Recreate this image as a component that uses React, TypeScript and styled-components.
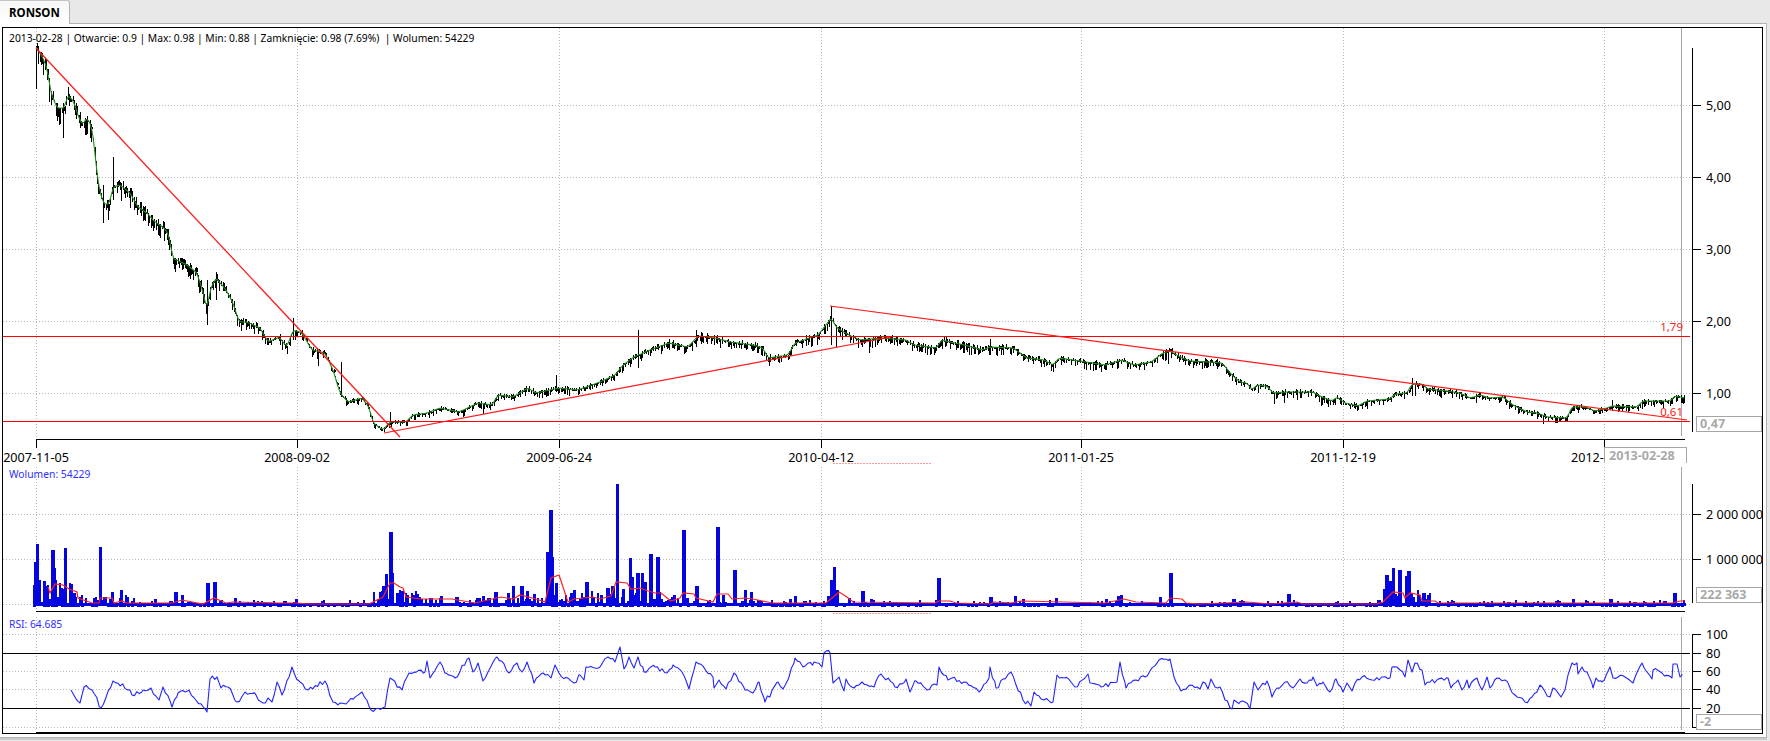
import styled, { createGlobalStyle } from "styled-components";

// all chart coordinates below are page pixels, every pane svg uses a viewBox that maps them 1:1
const LEFT = 3;
const WIDTH = 1759;
const AXIS_X = 1692;
const GRID_X = [36, 297, 559, 821, 1081, 1343, 1604];
const DATES: [number, string][] = [
	[36, "2007-11-05"],
	[297, "2008-09-02"],
	[559, "2009-06-24"],
	[821, "2010-04-12"],
	[1081, "2011-01-25"],
	[1343, "2011-12-19"],
];

const closeTrace = [
	36, 46, 38, 50, 44, 60, 48, 72, 50, 90, 57, 108, 65, 108, 67, 95, 73, 100, 78, 115, 82, 125, 87, 118, 92, 127, 95, 153, 98, 183, 103, 203, 109, 205, 113, 187, 120, 185, 130, 193, 138, 207, 147, 213, 155, 222, 163, 227, 168, 233, 172, 250, 172, 258, 187, 265, 197, 273, 203, 292, 207, 310, 210, 290, 216, 278, 226, 290, 233, 303, 239, 322, 247, 322, 260, 328, 268, 342, 279, 337, 287, 347, 293, 330, 302, 333, 312, 350, 325, 353, 333, 370, 340, 393, 348, 402, 362, 398, 369, 407, 373, 423, 383, 430, 390, 422, 406, 422, 413, 415, 427, 413, 440, 408, 459, 412, 478, 403, 492, 405, 498, 395, 513, 397, 528, 388, 536, 393, 559, 388, 578, 390, 600, 382, 615, 375, 623, 365, 634, 357, 650, 350, 669, 343, 688, 347, 698, 336, 715, 338, 730, 342, 753, 345, 763, 348, 768, 358, 788, 355, 795, 343, 818, 335, 826, 325, 831, 318, 837, 328, 849, 335, 860, 340, 883, 338, 906, 340, 914, 345, 937, 348, 941, 340, 964, 345, 983, 350, 990, 347, 1013, 348, 1027, 358, 1044, 360, 1053, 365, 1059, 358, 1086, 362, 1105, 365, 1122, 360, 1134, 365, 1151, 362, 1163, 353, 1170, 351, 1182, 358, 1190, 361, 1210, 362, 1222, 363, 1232, 375, 1240, 382, 1247, 383, 1252, 390, 1257, 385, 1267, 386, 1273, 393, 1287, 392, 1313, 392, 1322, 397, 1332, 401, 1337, 397, 1345, 403, 1358, 406, 1367, 401, 1390, 399, 1395, 394, 1407, 393, 1412, 384, 1423, 384, 1427, 389, 1447, 391, 1460, 393, 1470, 398, 1480, 395, 1490, 398, 1503, 397, 1513, 405, 1527, 412, 1537, 413, 1548, 417, 1567, 418, 1572, 407, 1585, 407, 1595, 411, 1607, 408, 1612, 406, 1637, 407, 1643, 401, 1670, 401, 1675, 396, 1685, 398,
];

// long wicks that stand out from the noise: x, high, low
const wicks = [
	[36, 49, 89], [103, 185, 223], [113, 157, 200], [207, 280, 325], [216, 272, 300], [293, 318, 340], [341, 362, 396], [390, 412, 425], [483, 404, 414], [556, 375, 392], [638, 330, 368], [696, 330, 345], [831, 306, 345], [836, 325, 347], [990, 339, 352], [1168, 350, 364], [1412, 378, 396], [1612, 400, 411],
];

const volumeBars = [
	[34, 562, 3], [36, 544, 3], [39, 580, 2], [43, 581, 3], [46, 590, 3], [51, 550, 4], [53, 568, 3], [64, 548, 3], [69, 597, 3], [73, 593, 3], [99, 547, 3], [111, 592, 3], [120, 590, 3], [154, 599, 3], [174, 592, 4], [181, 595, 3], [206, 583, 4], [213, 582, 4], [234, 598, 3], [295, 599, 3], [382, 586, 3], [385, 574, 3], [389, 532, 4], [392, 573, 2], [396, 593, 3], [401, 591, 3], [406, 595, 3], [417, 597, 3], [430, 598, 3], [440, 596, 3], [476, 598, 3], [482, 596, 3], [494, 592, 4], [507, 593, 3], [512, 586, 3], [520, 586, 4], [526, 591, 3], [533, 594, 3], [546, 552, 3], [549, 510, 4], [552, 557, 2], [555, 583, 3], [570, 593, 3], [573, 590, 3], [585, 582, 4],
	[600, 595, 3], [606, 588, 4], [611, 586, 4], [616, 484, 3], [622, 589, 3], [629, 558, 3], [631, 577, 3], [636, 573, 4], [641, 573, 3], [644, 582, 3], [649, 554, 4], [656, 557, 4], [673, 595, 3], [682, 530, 4], [686, 598, 3], [695, 586, 4], [716, 527, 4], [722, 595, 3], [733, 570, 4], [744, 590, 3], [750, 592, 3], [789, 599, 3], [794, 596, 3], [827, 596, 3], [830, 580, 3], [833, 567, 3], [836, 590, 3], [848, 598, 3], [861, 591, 4], [870, 599, 3], [937, 578, 4], [989, 597, 4], [1014, 596, 3], [1022, 599, 3], [1055, 598, 3], [1105, 599, 3], [1117, 596, 4], [1120, 595, 3], [1159, 597, 3], [1169, 573, 4],
	[1223, 602, 3], [1232, 599, 4], [1242, 601, 3], [1287, 594, 4], [1377, 600, 4], [1383, 589, 2], [1385, 575, 4], [1389, 581, 3], [1392, 568, 3], [1395, 598, 2], [1398, 570, 4], [1405, 576, 2], [1407, 571, 4], [1412, 597, 3], [1422, 593, 4], [1424, 598, 2], [1572, 599, 3], [1609, 599, 4], [1673, 593, 4],
];

const volumeAvg = [
	48, 587, 50, 593, 55, 584, 63, 585, 69, 589, 77, 592, 78, 598, 92, 603, 99, 603, 100, 598, 112, 598, 114, 603, 122, 601, 126, 603, 172, 603, 182, 600, 203, 604, 214, 598, 226, 603, 233, 602, 279, 603, 295, 603, 310, 604, 369, 604, 383, 597, 390, 583, 394, 583, 400, 587, 403, 588, 406, 597, 421, 599, 452, 599, 475, 603, 501, 597, 513, 599, 520, 595, 536, 599, 545, 602, 551, 578, 559, 575, 564, 590, 568, 602, 574, 599, 593, 597, 600, 599, 611, 596, 616, 582, 627, 583, 631, 589, 640, 588, 648, 591, 655, 593, 661, 593, 671, 601, 680, 598, 683, 593, 694, 594, 696, 598, 713, 602, 717, 594, 728, 594, 732, 599, 745, 598, 753, 599, 772, 603, 826, 603, 832, 598, 839, 592, 847, 597, 853, 602, 935, 603, 939, 601, 950, 601, 956, 603, 990, 604, 994, 602, 1011, 603, 1021, 601, 1105, 603, 1124, 599, 1136, 602, 1166, 603, 1170, 598, 1182, 599, 1186, 603, 1200, 604, 1247, 602, 1270, 604, 1297, 602, 1303, 604, 1377, 604, 1383, 602, 1393, 592, 1403, 593, 1405, 598, 1410, 593, 1420, 595, 1422, 601, 1435, 601, 1438, 603, 1672, 603, 1680, 601, 1685, 601,
];

const rsiTrace = [
	71, 690, 80, 703, 84, 687, 92, 690, 101, 708, 113, 681, 130, 690, 132, 695, 143, 690, 151, 688, 159, 700, 163, 687, 172, 707, 178, 693, 189, 690, 207, 712, 210, 679, 217, 677, 221, 688, 228, 687, 237, 702, 245, 692, 256, 695, 263, 703, 268, 698, 272, 702, 277, 682, 282, 695, 292, 667, 298, 680, 308, 690, 325, 681, 333, 702, 346, 704, 362, 692, 371, 710, 385, 707, 390, 678, 402, 690, 409, 673, 425, 672, 427, 661, 430, 678, 440, 662, 446, 673, 455, 678, 469, 658, 473, 672, 478, 663, 483, 681, 488, 672, 497, 657, 509, 673, 517, 663, 522, 672, 527, 662, 534, 683, 543, 673, 551, 678, 555, 665, 559, 673, 574, 683, 580, 675, 584, 680, 586, 667, 600, 667, 608, 657, 615, 662, 620, 647, 624, 669, 629, 657, 634, 668, 638, 657, 644, 672, 655, 667, 667, 673, 673, 665, 682, 672, 689, 689, 696, 662, 713, 677, 714, 688, 719, 680, 726, 689, 734, 673, 745, 690, 753, 693, 759, 682, 765, 702, 778, 682, 783, 689, 789, 677, 795, 658, 803, 667, 814, 662, 822, 667, 824, 653, 830, 653, 833, 683, 839, 677, 844, 691, 846, 679, 854, 688, 862, 682, 874, 687, 881, 674, 895, 687, 906, 679, 910, 692, 916, 681, 927, 690, 937, 685, 939, 667, 948, 680, 952, 678, 964, 682, 979, 692, 989, 678, 990, 667, 996, 688, 1011, 672, 1023, 700, 1031, 706, 1034, 692, 1044, 700, 1053, 702, 1057, 675, 1071, 682, 1075, 687, 1088, 674, 1090, 683, 1101, 687, 1117, 682, 1120, 662, 1126, 688, 1136, 680, 1145, 677, 1159, 660, 1170, 659, 1174, 677, 1181, 691, 1190, 685, 1200, 689, 1203, 682, 1208, 689, 1211, 679, 1215, 687, 1220, 687, 1225, 700, 1232, 709, 1234, 700, 1240, 702, 1245, 702, 1250, 709, 1254, 682, 1258, 690, 1267, 681, 1272, 697, 1277, 688, 1285, 682, 1293, 688, 1300, 679, 1307, 683, 1313, 677, 1317, 686, 1323, 682, 1330, 692, 1336, 679, 1343, 692, 1347, 683, 1352, 691, 1355, 683, 1362, 677, 1372, 680, 1383, 677, 1390, 678, 1392, 667, 1400, 670, 1405, 677, 1408, 660, 1412, 672, 1415, 663, 1422, 670, 1425, 685, 1437, 680, 1448, 678, 1451, 688, 1458, 680, 1462, 690, 1467, 680, 1469, 688, 1477, 678, 1482, 690, 1487, 677, 1490, 688, 1497, 678, 1505, 680, 1515, 695, 1525, 702, 1532, 697, 1540, 685, 1550, 697, 1553, 688, 1561, 697, 1565, 690, 1568, 675, 1572, 663, 1577, 663, 1578, 674, 1582, 667, 1587, 672, 1593, 688, 1596, 678, 1602, 682, 1610, 667, 1613, 678, 1625, 677, 1633, 683, 1642, 663, 1647, 672, 1652, 679, 1653, 670, 1662, 673, 1672, 678, 1673, 664, 1677, 664, 1680, 677, 1685, 676,
];

function makeRandom(seed: number) {
	return () => {
		seed = (seed + 0x6d2b79f5) | 0;
		let t = Math.imul(seed ^ (seed >>> 15), 1 | seed);
		t = (t + Math.imul(t ^ (t >>> 7), 61 | t)) ^ t;
		return ((t ^ (t >>> 14)) >>> 0) / 4294967296;
	};
}

function interpolate(trace: number[], x: number) {
	for (let i = 0; i < trace.length - 2; i += 2) {
		if (x <= trace[i + 2]) {
			const span = trace[i + 2] - trace[i] || 1;
			return trace[i + 1] + ((trace[i + 3] - trace[i + 1]) * (x - trace[i])) / span;
		}
	}
	return trace[trace.length - 1];
}

function toPoints(trace: number[]) {
	let points = "";
	for (let i = 0; i < trace.length; i += 2) points += `${trace[i]},${trace[i + 1]} `;
	return points;
}

function buildBars() {
	const random = makeRandom(17);
	let d = "";
	for (let x = 36; x < 1685; x += 1.22) {
		const mid = interpolate(closeTrace, x);
		const price = 1 + (393 - mid) / 72;
		const amp = Math.min(2.5 + price * 3.2, 20);
		const spike = random() < 0.05 ? 1.8 : 1;
		const roll = random();
		const high = Math.round(mid - amp * roll * roll * 0.5);
		const fall = random();
		const low = Math.round(mid + amp * fall * fall * spike);
		const column = Math.round(x);
		d += `M${column + 0.5} ${high}V${low + 1}`;
		if (random() < 0.1) d += `M${column + 1.5} ${high + 1}V${low}`;
	}
	wicks.forEach(([x, high, low]) => {
		d += `M${x + 0.5} ${high}V${low}`;
	});
	return d;
}

function buildAverage() {
	const samples: number[] = [];
	for (let x = 36; x < 1685; x += 1.5) samples.push(interpolate(closeTrace, x));
	let points = "";
	samples.forEach((_, i) => {
		const from = Math.max(0, i - 1);
		const to = Math.min(samples.length - 1, i + 1);
		const slice = samples.slice(from, to + 1);
		points += `${(36 + i * 1.5).toFixed(1)},${(slice.reduce((a, b) => a + b, 0) / slice.length).toFixed(1)} `;
	});
	return points;
}

function buildVolumeNoise() {
	const random = makeRandom(5);
	let d = "M33 603H1686V606H33Z";
	for (let x = 33; x < 1685; x += 2) {
		let chance = 0.2;
		let reach = 2;
		if (x < 75) {
			chance = 0.9;
			reach = 22;
		} else if (x < 135) {
			chance = 0.5;
			reach = 7;
		} else if ((x > 372 && x < 420) || (x > 545 && x < 665) || (x > 1380 && x < 1430)) {
			chance = 0.7;
			reach = 12;
		} else if (x > 420 && x < 700) {
			chance = 0.45;
			reach = 5;
		}
		if (random() < chance) {
			const top = 602 - Math.round(random() * reach);
			d += `M${x} ${top}h2V605h-2Z`;
		}
		if (random() < 0.35) d += `M${x} 606h3v1h-3Z`;
	}
	return d;
}

function buildRsi() {
	const random = makeRandom(31);
	let points = "";
	for (let i = 0; i < rsiTrace.length - 2; i += 2) {
		points += `${rsiTrace[i]},${rsiTrace[i + 1]} `;
		const gap = rsiTrace[i + 2] - rsiTrace[i];
		for (let x = rsiTrace[i] + 2.4; x < rsiTrace[i + 2] - 1; x += 2.4) {
			points += `${x.toFixed(1)},${(interpolate(rsiTrace, x) + (gap > 4 ? (random() - 0.5) * 5 : 0)).toFixed(1)} `;
		}
	}
	return points;
}

const barsPath = buildBars();
const averagePoints = buildAverage();
const volumeNoise = buildVolumeNoise();
const rsiPoints = buildRsi();

const GlobalStyle = createGlobalStyle`
	html, body {
		margin: 0;
		overflow: hidden;
		background: #e9e9e9;
	}
`;

const Page = styled.div`
	width: 1770px;
	height: 741px;
	display: flex;
	flex-direction: column;
	font-family: "Noto Sans", sans-serif;
	color: #000;
`;
const TabBar = styled.div`
	height: 23px;
	display: flex;
	background: #e8e8e8;
`;
const Tab = styled.div`
	width: 70px;
	height: 24px;
	box-sizing: border-box;
	margin-bottom: -1px;
	padding: 3px 0 0 9px;
	position: relative;
	z-index: 1;
	font-size: 11.5px;
	font-weight: 700;
	line-height: 18px;
	background: linear-gradient(#f7f7f7, #ffffff);
	border-top: 1px solid #c4c4c4;
	border-right: 1px solid #b4b4b4;
	border-top-right-radius: 3px;
`;
const Panel = styled.div`
	width: 1767px;
	height: 715px;
	box-sizing: border-box;
	padding: 3px 3px 4px 2px;
	background: #fff;
	border: 1px solid #b4b4b4;
	border-left: none;
	box-shadow: 0 2px 0 #cdcdcd;
`;
const Frame = styled.div`
	width: 1761px;
	height: 707px;
	box-sizing: border-box;
	display: flex;
	flex-direction: column;
	background: #fff;
	border: 1px solid #000;
`;
const Pane = styled.div<{ $height: number }>`
	position: relative;
	height: ${(p) => p.$height}px;
	flex: none;
`;
const PaneSvg = styled.svg`
	display: block;
	font-family: "Noto Sans", sans-serif;
	font-size: 12.6px;
`;
const Grid = styled.path`
	stroke: #b9b9b9;
	stroke-width: 1;
	stroke-dasharray: 1 2;
	fill: none;
	shape-rendering: crispEdges;
`;
const Solid = styled.path`
	stroke: #000;
	stroke-width: 1;
	fill: none;
	shape-rendering: crispEdges;
`;
const Level = styled.path`
	stroke: #ff0000;
	stroke-width: 1;
	fill: none;
	shape-rendering: crispEdges;
`;
const Trend = styled.path`
	stroke: #ff1a1a;
	stroke-width: 1.25;
	fill: none;
`;
const Crosshair = styled.path`
	stroke: #a6a6a6;
	stroke-width: 1;
	fill: none;
	shape-rendering: crispEdges;
`;
const Bars = styled.path`
	stroke: #000;
	stroke-width: 1;
	fill: none;
	shape-rendering: crispEdges;
`;
const Average = styled.polyline`
	stroke: #1f8f1f;
	stroke-width: 1.1;
	fill: none;
	stroke-linejoin: round;
`;
const VolumeShape = styled.path`
	fill: #0505df;
	shape-rendering: crispEdges;
`;
const VolumeAverage = styled.polyline`
	stroke: #ff2020;
	stroke-width: 1.2;
	fill: none;
`;
const RsiLine = styled.polyline`
	stroke: #2424ff;
	stroke-width: 1.1;
	fill: none;
	stroke-linejoin: round;
`;
const Marker = styled.path`
	stroke: #ff9a9a;
	stroke-width: 1.5;
	stroke-dasharray: 2 1;
	fill: none;
	shape-rendering: crispEdges;
`;
const LevelLabel = styled.text`
	fill: #ff2020;
	font-size: 11.5px;
	text-anchor: end;
`;
const Legend = styled.div<{ $top: number; $color?: string }>`
	position: absolute;
	left: 6px;
	top: ${(p) => p.$top}px;
	font-size: 10.3px;
	line-height: 14px;
	white-space: pre;
	color: ${(p) => p.$color || "#000"};
`;
const ValueBox = styled.div<{ $top: number }>`
	position: absolute;
	right: 0;
	top: ${(p) => p.$top}px;
	width: 66px;
	height: 16px;
	box-sizing: border-box;
	padding-left: 3px;
	background: #fff;
	border: 1px solid #a6a6a6;
	color: #a9a9a9;
	font-size: 12.6px;
	font-weight: 700;
	line-height: 14px;
`;
const DateBox = styled.div`
	position: absolute;
	left: 1601px;
	top: 419px;
	width: 83px;
	height: 16px;
	box-sizing: border-box;
	padding-left: 4px;
	background: #fff;
	border: 1px solid #a6a6a6;
	border-bottom: none;
	color: #a9a9a9;
	font-size: 12.6px;
	font-weight: 700;
	line-height: 15px;
`;

type ChartSvgProps = { top: number; height: number; children: React.ReactNode };

function ChartSvg({ top, height, children }: ChartSvgProps) {
	return (
		<PaneSvg width={WIDTH} height={height} viewBox={`${LEFT} ${top} ${WIDTH} ${height}`}>
			{children}
		</PaneSvg>
	);
}

function hLines(ys: number[], x1 = 3, x2 = AXIS_X) {
	return ys.map((y) => `M${x1} ${y + 0.5}H${x2}`).join("");
}

function vLines(y1: number, y2: number, xs = GRID_X) {
	return xs.map((x) => `M${x + 0.5} ${y1}V${y2}`).join("");
}

function AxisTicks({ ticks }: { ticks: [number, string][] }) {
	return (
		<>
			{ticks.map(([y, label]) => (
				<g key={y}>
					<Solid d={`M${AXIS_X} ${y + 0.5}H${AXIS_X + 9}`} />
					{label && (
						<text x={1706} y={y + 5}>
							{label}
						</text>
					)}
				</g>
			))}
		</>
	);
}

function PricePane() {
	return (
		<Pane $height={439}>
			<ChartSvg top={28} height={439}>
				<Grid d={hLines([105, 177, 249, 321, 393]) + vLines(28, 439)} />
				<Crosshair d="M1681.5 28V436" />
				<Bars d={barsPath} />
				<Average points={averagePoints} />
				<Level d={hLines([336, 421], 3, 1690)} />
				<Trend d="M36 48L400 437" />
				<Trend d="M384 433L891 337" />
				<Trend d="M830 306L1687 420" />
				<LevelLabel x={1683} y={331}>
					1,79
				</LevelLabel>
				<LevelLabel x={1683} y={416}>
					0,61
				</LevelLabel>
				<Solid d={`M${AXIS_X + 0.5} 48V432`} />
				<AxisTicks
					ticks={[
						[105, "5,00"],
						[177, "4,00"],
						[249, "3,00"],
						[321, "2,00"],
						[393, "1,00"],
					]}
				/>
				<Solid d="M36 439.5H1685" />
				<Solid d={vLines(439, 448)} />
				{DATES.map(([x, date]) => (
					<text key={date} x={x} y={462} textAnchor="middle">
						{date}
					</text>
				))}
				<text x={1571} y={462}>
					2012-
				</text>
				<Marker d="M833 463.5H931" />
			</ChartSvg>
			<Legend $top={3}>{"2013-02-28 | Otwarcie: 0.9 | Max: 0.98 | Min: 0.88 | Zamknięcie: 0.98 (7.69%)  | Wolumen: 54229"}</Legend>
			<ValueBox $top={388}>0,47</ValueBox>
			<DateBox>2013-02-28</DateBox>
		</Pane>
	);
}

function VolumePane() {
	const bars = volumeBars.map(([x, top, w]) => `M${x} ${top}h${w}V605h-${w}Z`).join("");
	return (
		<Pane $height={150}>
			<ChartSvg top={467} height={150}>
				<Grid d={hLines([514, 559, 604]) + vLines(467, 611)} />
				<Crosshair d="M1681.5 467V603" />
				<VolumeShape d={volumeNoise + bars} />
				<VolumeAverage points={toPoints(volumeAvg)} />
				<Solid d={`M${AXIS_X + 0.5} 484V603`} />
				<AxisTicks
					ticks={[
						[514, "2 000 000"],
						[559, "1 000 000"],
					]}
				/>
				<Solid d="M36 611.5H1685" />
				<Marker d="M833 613.5H931" />
			</ChartSvg>
			<Legend $top={0} $color="#2f2fff">
				Wolumen: 54229
			</Legend>
			<ValueBox $top={120}>222 363</ValueBox>
		</Pane>
	);
}

function RsiPane() {
	return (
		<Pane $height={116}>
			<ChartSvg top={617} height={116}>
				<Grid d={hLines([634, 671, 689, 727]) + vLines(617, 729)} />
				<Crosshair d="M1681.5 617V730" />
				<Solid d={hLines([653, 708], 3, 1690)} />
				<RsiLine points={rsiPoints} />
				<Solid d={`M${AXIS_X + 0.5} 634V727`} />
				<AxisTicks
					ticks={[
						[634, "100"],
						[653, "80"],
						[671, "60"],
						[689, "40"],
						[708, "20"],
						[727, ""],
					]}
				/>
				<Solid d="M36 732H1685M36 733H1685" />
			</ChartSvg>
			<Legend $top={0} $color="#2f2fff">
				RSI: 64.685
			</Legend>
			<ValueBox $top={97}>-2</ValueBox>
		</Pane>
	);
}

export default function App() {
	return (
		<Page>
			<GlobalStyle />
			<TabBar>
				<Tab>RONSON</Tab>
			</TabBar>
			<Panel>
				<Frame>
					<PricePane />
					<VolumePane />
					<RsiPane />
				</Frame>
			</Panel>
		</Page>
	);
}
